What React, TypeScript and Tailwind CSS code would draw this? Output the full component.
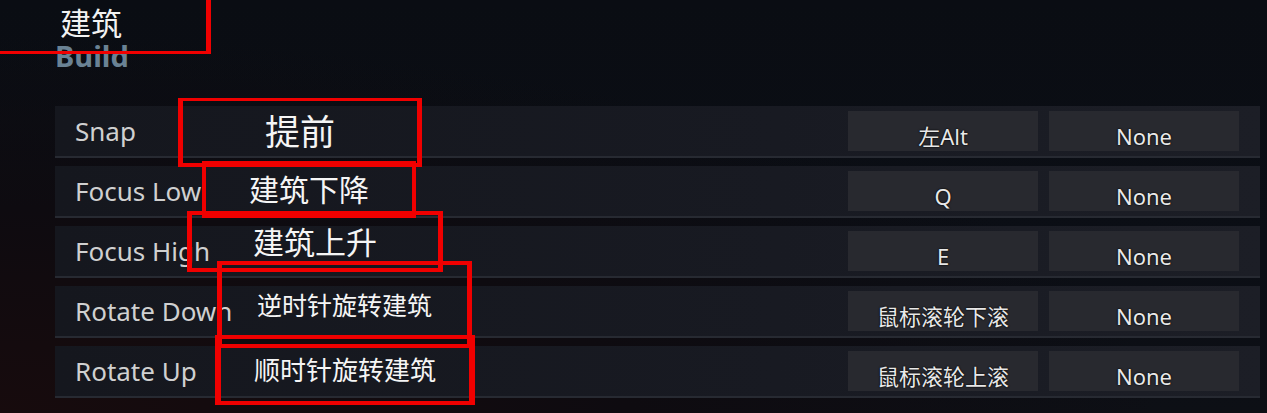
import React from "react";

const rows = [
  { label: "Snap", key: "左Alt", alt: "None" },
  { label: "Focus Low", key: "Q", alt: "None" },
  { label: "Focus High", key: "E", alt: "None" },
  { label: "Rotate Down", key: "鼠标滚轮下滚", alt: "None" },
  { label: "Rotate Up", key: "鼠标滚轮上滚", alt: "None" },
];

function KeyButton({ text }: { text: string }) {
  return (
    <div className="flex h-[40px] w-[190px] items-center justify-center bg-[#28292f] pt-[9px] text-[22px] leading-[26px] text-[#e8e8e8] [text-shadow:0_0_2px_#000,0_0_1px_#000]">
      {text}
    </div>
  );
}

export default function App() {
  return (
    <div className="relative h-[413px] w-[1267px] overflow-hidden bg-[radial-gradient(ellipse_at_0%_100%,#170b0d_0%,#0e0b10_35%,transparent_65%),linear-gradient(180deg,#0a0d13_0%,#0b0e15_60%,#0d0f15_100%)] font-['Noto_Sans','Noto_Sans_CJK_SC',sans-serif]">
      <div className="pt-[5px]">
        <div className="pl-[60px] text-[31px] leading-[36px] text-[#f2f2f2]">建筑</div>
        <div className="pl-[55px] text-[29px] font-bold leading-[30px] text-[#6a8294]">Build</div>
      </div>

      <div className="ml-[55px] mt-[35px] flex w-[1205px] flex-col gap-[8px]">
        {rows.map((r) => (
          <div
            key={r.label}
            className="flex h-[52px] items-center border-b-2 border-[#272a32] bg-[linear-gradient(90deg,#15171e_0%,#181a22_60%,#1c1e26_100%)] pl-[20px] pr-[21px]"
          >
            <div className="flex-1 text-[26px] leading-[32px] text-[#d0d0d0]">{r.label}</div>
            <div className="flex gap-[11px]">
              <KeyButton text={r.key} />
              <KeyButton text={r.alt} />
            </div>
          </div>
        ))}
      </div>

      {/* annotation overlays */}
      <div className="absolute left-[-5px] top-[-5px] h-[59px] w-[216px] border-b-[3px] border-r-[5px] border-[#f00000]" />

      <div className="absolute left-[178px] top-[98px] flex h-[69px] w-[244px] items-center justify-center border-x-[5px] border-b-[4px] border-t-[3px] border-[#f00000] text-[35px] leading-[40px] text-[#f5f5f5]">
        提前
      </div>
      <div className="absolute left-[202px] top-[161px] flex h-[57px] w-[214px] items-center justify-center border-[4px] border-[#f00000] text-[30px] leading-[36px] text-[#f5f5f5]">
        建筑下降
      </div>
      <div className="absolute left-[187px] top-[211px] flex h-[61px] w-[256px] items-center justify-center border-x-[5px] border-y-[4px] border-[#f00000] text-[31px] leading-[36px] text-[#f5f5f5]">
        建筑上升
      </div>
      <div className="absolute left-[217px] top-[261px] flex h-[87px] w-[255px] items-center justify-center border-x-[5px] border-y-[4px] border-[#f00000] text-[25px] leading-[30px] text-[#f5f5f5]">
        逆时针旋转建筑
      </div>
      <div className="absolute left-[215px] top-[335px] flex h-[70px] w-[260px] items-center justify-center border-x-[6px] border-y-[4px] border-[#f00000] text-[26px] leading-[30px] text-[#f5f5f5]">
        顺时针旋转建筑
      </div>
    </div>
  );
}
